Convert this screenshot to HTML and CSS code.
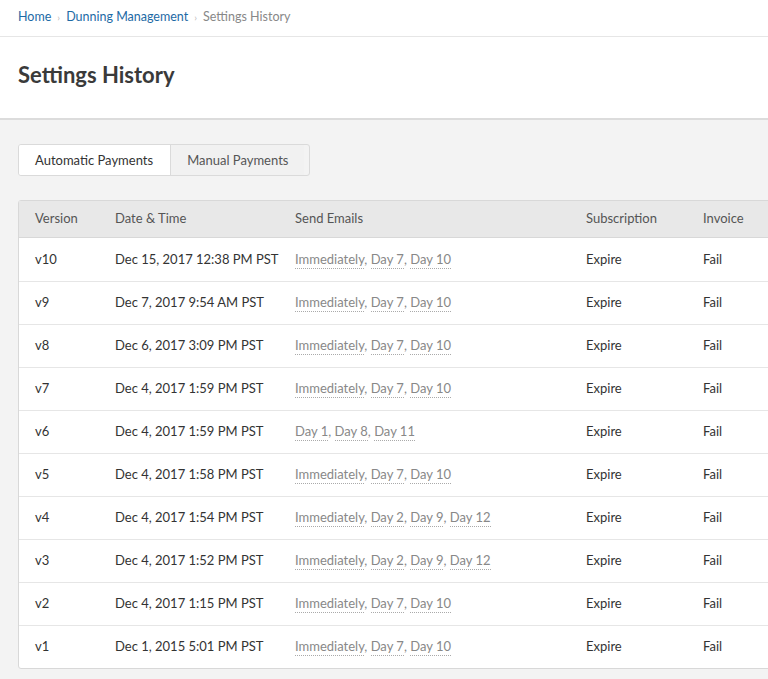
FILE: index.html
```html
<!DOCTYPE html>
<html>
<head>
<meta charset="utf-8">
<link rel="stylesheet" href="styles.css">
</head>
<body>
<div class="top">
  <nav class="crumbs">
    <a href="#">Home</a><span class="sep">›</span><a href="#">Dunning Management</a><span class="sep">›</span><span class="cur">Settings History</span>
  </nav>
  <h1 class="title">Settings History</h1>
</div>
<main class="content">
  <div class="tabs">
    <div class="tab active">Automatic Payments</div>
    <div class="tab">Manual Payments</div>
  </div>
  <div class="table">
    <div class="row head">
      <div>Version</div><div>Date &amp; Time</div><div>Send Emails</div><div>Subscription</div><div>Invoice</div>
    </div>
    <div class="row"><div>v10</div><div>Dec 15, 2017 12:38 PM PST</div><div class="em"><span>Immediately</span>, <span>Day 7</span>, <span>Day 10</span></div><div>Expire</div><div>Fail</div></div>
    <div class="row"><div>v9</div><div>Dec 7, 2017 9:54 AM PST</div><div class="em"><span>Immediately</span>, <span>Day 7</span>, <span>Day 10</span></div><div>Expire</div><div>Fail</div></div>
    <div class="row"><div>v8</div><div>Dec 6, 2017 3:09 PM PST</div><div class="em"><span>Immediately</span>, <span>Day 7</span>, <span>Day 10</span></div><div>Expire</div><div>Fail</div></div>
    <div class="row"><div>v7</div><div>Dec 4, 2017 1:59 PM PST</div><div class="em"><span>Immediately</span>, <span>Day 7</span>, <span>Day 10</span></div><div>Expire</div><div>Fail</div></div>
    <div class="row"><div>v6</div><div>Dec 4, 2017 1:59 PM PST</div><div class="em"><span>Day 1</span>, <span>Day 8</span>, <span>Day 11</span></div><div>Expire</div><div>Fail</div></div>
    <div class="row"><div>v5</div><div>Dec 4, 2017 1:58 PM PST</div><div class="em"><span>Immediately</span>, <span>Day 7</span>, <span>Day 10</span></div><div>Expire</div><div>Fail</div></div>
    <div class="row"><div>v4</div><div>Dec 4, 2017 1:54 PM PST</div><div class="em"><span>Immediately</span>, <span>Day 2</span>, <span>Day 9</span>, <span>Day 12</span></div><div>Expire</div><div>Fail</div></div>
    <div class="row"><div>v3</div><div>Dec 4, 2017 1:52 PM PST</div><div class="em"><span>Immediately</span>, <span>Day 2</span>, <span>Day 9</span>, <span>Day 12</span></div><div>Expire</div><div>Fail</div></div>
    <div class="row"><div>v2</div><div>Dec 4, 2017 1:15 PM PST</div><div class="em"><span>Immediately</span>, <span>Day 7</span>, <span>Day 10</span></div><div>Expire</div><div>Fail</div></div>
    <div class="row"><div>v1</div><div>Dec 1, 2015 5:01 PM PST</div><div class="em"><span>Immediately</span>, <span>Day 7</span>, <span>Day 10</span></div><div>Expire</div><div>Fail</div></div>
  </div>
</main>
</body>
</html>
```
FILE: styles.css
```css
html, body {
  margin: 0;
  padding: 0;
}
body {
  background: #f3f3f3;
  font-family: Lato, "Open Sans", sans-serif;
  color: #333;
  overflow: hidden;
  height: 679px;
}
.top {
  background: #fff;
  border-bottom: 2px solid #dcdcdc;
}
.crumbs {
  height: 37px;
  box-sizing: border-box;
  padding: 8px 18px 0;
  border-bottom: 1px solid #e6e6e6;
  font-size: 12.5px;
  line-height: 17px;
}
.crumbs a {
  color: #1d6aa5;
  text-decoration: none;
}
.crumbs .sep {
  color: #bbb;
  font-size: 10px;
  margin: 0 6px;
}
.crumbs .cur {
  color: #888;
}
.title {
  margin: 0;
  height: 81px;
  box-sizing: border-box;
  padding: 25px 18px 0;
  font-size: 22px;
  line-height: 26px;
  font-weight: 700;
  color: #3a3a3a;
}
.content {
  padding: 24px 0 0 18px;
}
.tabs {
  display: flex;
  width: 292px;
  height: 32px;
  border: 1px solid #dadada;
  border-radius: 3px;
  box-sizing: border-box;
  overflow: hidden;
  font-size: 13px;
}
.tab {
  display: flex;
  align-items: center;
  padding: 0 16px;
  background: #f1f1f1;
  color: #555;
}
.tab.active {
  padding: 0 17px 0 16px;
  background: #fff;
  color: #333;
  border-right: 1px solid #dadada;
}
.table {
  margin-top: 24px;
  width: 780px;
  background: #fff;
  border: 1px solid #d8d8d8;
  border-radius: 3px;
  font-size: 13px;
}
.row {
  display: grid;
  grid-template-columns: 80px 180px 291px 117px 1fr;
  height: 43px;
  align-items: center;
  padding-left: 16px;
  padding-bottom: 2px;
  border-top: 1px solid #e6e6e6;
  box-sizing: border-box;
}
.row.head {
  height: 37px;
  border-top: none;
  background: #e8e8e8;
  color: #555;
  border-bottom: 1px solid #d8d8d8;
}
.head + .row {
  border-top: none;
}
.em {
  color: #888;
}
.em span {
  border-bottom: 1px dotted #aaa;
  padding-bottom: 1px;
}
```
